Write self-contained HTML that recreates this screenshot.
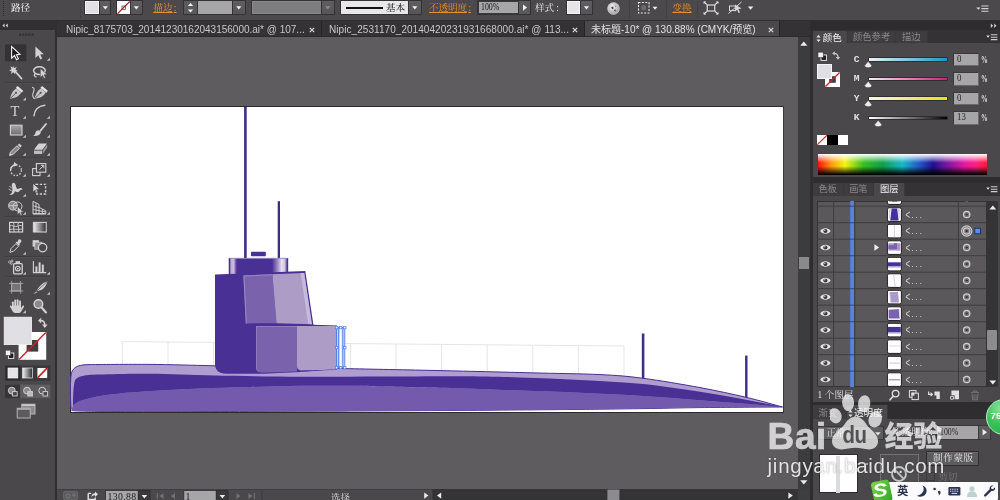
<!DOCTYPE html>
<html lang="zh-CN">
<head>
<meta charset="utf-8">
<title>Illustrator</title>
<style>
*{box-sizing:border-box;margin:0;padding:0}
html,body{width:1000px;height:500px;overflow:hidden;background:#5f5c5f}
body{position:relative;will-change:transform;font-family:"Liberation Sans","Noto Sans CJK SC",sans-serif;font-size:11px;color:#e4e4e4}
.a{position:absolute}
.serif{font-family:"Liberation Serif","Noto Serif CJK SC",serif}
#ctrl{left:0;top:0;width:1000px;height:20px;background:#4b494c}
#ctrlline{left:0;top:20px;width:1000px;height:1px;background:#2f2e31}
#tabs{left:57px;top:21px;width:754px;height:16px;background:#343235;border-bottom:1px solid #2c2a2d}
.tab{top:21px;height:16px;line-height:16px;font-size:12px;color:#c8c8c8;white-space:nowrap;overflow:hidden}
#canvas{left:57px;top:37px;width:741px;height:452px;background:#5f5c5f}
#artboard{left:70px;top:106px;width:714px;height:307px;background:#fff;border:1px solid #2a292c;border-right-color:#3a393c}
#lefthead{left:0;top:21px;width:55px;height:9px;background:#312f32}
#leftbody{left:0;top:30px;width:55px;height:470px;background:#4a484b}
#leftedge{left:55px;top:21px;width:2px;height:479px;background:#2f2e31}
#vscroll{left:798px;top:37px;width:12px;height:452px;background:#3c3b3e}
#vdiv{left:810px;top:21px;width:3px;height:479px;background:#2e2d30}
#right{left:813px;top:21px;width:187px;height:479px;background:#4a484b}
#status{left:57px;top:489px;width:753px;height:11px;background:#4a484b}
.orange{color:#e8902c;text-decoration:underline}
.fld{background:#a5a4a7;color:#1a1a1a}
.btn{background:#5b5a5d}
.sep{width:1px;background:#3a393c}
</style>
</head>
<body>
<!-- ===== base regions ===== -->
<div class="a" id="canvas"></div>
<div class="a" id="artboard"></div>
<!-- ARTWORK -->
<svg class="a" style="left:0;top:0" width="1000" height="500" viewBox="0 0 1000 500">
<defs><linearGradient id="cyl" x1="0" x2="1" y1="0" y2="0"><stop offset="0" stop-color="#483095"/><stop offset="0.02" stop-color="#483095"/><stop offset="0.035" stop-color="#b8a8d8"/><stop offset="0.085" stop-color="#cabee2"/><stop offset="0.115" stop-color="#7860ae"/><stop offset="0.14" stop-color="#493095"/><stop offset="0.73" stop-color="#493095"/><stop offset="0.78" stop-color="#7a62b0"/><stop offset="0.84" stop-color="#b0a0d0"/><stop offset="0.89" stop-color="#e6e0f2"/><stop offset="0.94" stop-color="#cfc6e2"/><stop offset="0.965" stop-color="#8a76b8"/><stop offset="0.985" stop-color="#483095"/><stop offset="1" stop-color="#483095"/></linearGradient></defs>
<g stroke="#dededf" stroke-width="0.8" fill="none"><path d="M122.4,341.6 L624.0,346.0"/><path d="M122.4,341.6 V375.0"/><path d="M168.0,342.0 V375.0"/><path d="M213.6,342.4 V375.0"/><path d="M259.2,342.8 V375.0"/><path d="M304.8,343.2 V375.0"/><path d="M350.4,343.6 V375.0"/><path d="M396.0,344.0 V375.0"/><path d="M441.6,344.4 V375.0"/><path d="M487.2,344.8 V375.0"/><path d="M532.8,345.2 V375.0"/><path d="M578.4,345.6 V375.0"/><path d="M624.0,346.0 V375.0"/></g>
<rect x="641.8" y="333.5" width="2.6" height="46" fill="#3e2d84"/>
<rect x="745.1" y="355.6" width="2.4" height="42.5" fill="#3e2d84"/>
<path d="M70.8,405.0 C70.3,395 70.3,385 70.8,377 C71.5,368 76,365 88,364.6 C98.3,364.6 128.8,364.2 150.0,364.4 C171.2,364.6 190.0,365.2 215.0,365.8 C240.0,366.4 278.3,367.3 300.0,367.8 C321.7,368.3 321.7,368.1 345.0,368.6 C368.3,369.1 409.2,369.9 440.0,370.6 C470.8,371.3 503.3,372.1 530.0,372.8 C556.7,373.5 581.2,373.7 600.0,374.6 C618.8,375.5 626.3,376.1 643.0,378.3 C659.7,380.5 682.8,384.4 700.0,387.6 C717.2,390.8 732.2,394.1 746.0,397.3 C759.8,400.5 776.4,405.4 782.5,407.0 C768.8,407.1 723.2,407.3 700.0,407.6 C676.8,407.9 663.0,408.3 643.0,408.6 C623.0,408.9 610.5,409.1 580.0,409.4 C549.5,409.7 506.7,410.1 460.0,410.4 C413.3,410.7 351.7,411.0 300.0,411.2 C248.3,411.4 186.7,411.6 150.0,411.6 C113.3,411.6 93.0,411.4 80.0,411.0 C67.0,410.6 73.3,409.8 72.0,409.5 C70.9,408.5 70.8,407 70.8,405 Z" fill="#af9dd0" stroke="#483095" stroke-width="1"/>
<path d="M73.0,406.0 C74.2,405.2 75.5,402.7 80.0,401.0 C84.5,399.3 91.7,397.4 100.0,396.0 C108.3,394.6 120.0,393.4 130.0,392.5 C140.0,391.6 148.3,391.1 160.0,390.4 C171.7,389.7 185.0,389.1 200.0,388.5 C215.0,387.9 233.3,387.4 250.0,387.0 C266.7,386.6 283.3,386.0 300.0,385.8 C316.7,385.6 336.7,385.7 350.0,385.8 C363.3,385.9 361.7,386.0 380.0,386.4 C398.3,386.8 436.7,387.5 460.0,388.2 C483.3,388.9 500.0,389.8 520.0,390.6 C540.0,391.4 559.5,391.9 580.0,392.8 C600.5,393.7 623.0,394.8 643.0,396.0 C663.0,397.2 682.8,398.9 700.0,400.2 C717.2,401.5 732.2,402.7 746.0,403.8 C759.8,404.9 776.4,406.5 782.5,407.0 C768.8,407.1 723.2,407.3 700.0,407.6 C676.8,407.9 663.0,408.3 643.0,408.6 C623.0,408.9 610.5,409.1 580.0,409.4 C549.5,409.7 506.7,410.1 460.0,410.4 C413.3,410.7 351.7,411.0 300.0,411.2 C248.3,411.4 186.7,411.6 150.0,411.6 C113.3,411.6 93.0,411.4 80.0,411.0 C67.0,410.6 73.3,409.8 72.0,409.5 C72,408.5 72.5,407 73,406 Z" fill="#745aac"/>
<path d="M73.0,406.0 C73,397 73.3,388 74.5,382 C76,376.5 82,374.8 100,374.5 C108.3,374.4 130.8,373.6 150.0,373.8 C169.2,374.0 190.0,375.1 215.0,375.6 C240.0,376.1 272.5,376.6 300.0,376.8 C327.5,377.0 353.3,376.7 380.0,376.6 C406.7,376.5 436.7,376.1 460.0,376.2 C483.3,376.3 500.0,376.8 520.0,377.4 C540.0,378.0 559.5,378.9 580.0,380.0 C600.5,381.1 623.0,382.0 643.0,384.0 C663.0,386.0 682.8,389.2 700.0,391.8 C717.2,394.4 732.2,397.3 746.0,399.8 C759.8,402.3 776.4,405.8 782.5,407.0 C776.4,406.5 759.8,404.9 746.0,403.8 C732.2,402.7 717.2,401.5 700.0,400.2 C682.8,398.9 663.0,397.2 643.0,396.0 C623.0,394.8 600.5,393.7 580.0,392.8 C559.5,391.9 540.0,391.4 520.0,390.6 C500.0,389.8 483.3,388.9 460.0,388.2 C436.7,387.5 398.3,386.8 380.0,386.4 C361.7,386.0 363.3,385.9 350.0,385.8 C336.7,385.7 316.7,385.6 300.0,385.8 C283.3,386.0 266.7,386.6 250.0,387.0 C233.3,387.4 215.0,387.9 200.0,388.5 C185.0,389.1 171.7,389.7 160.0,390.4 C148.3,391.1 140.0,391.6 130.0,392.5 C120.0,393.4 108.3,394.6 100.0,396.0 C91.7,397.4 84.5,399.3 80.0,401.0 C75.5,402.7 74.2,405.2 73.0,406.0 Z" fill="#493095"/>
<rect x="244.1" y="106.8" width="2.6" height="152" fill="#3e2d84"/>
<rect x="277.7" y="201.2" width="2.3" height="58" fill="#3e2d84"/>
<rect x="251" y="251.7" width="14.8" height="4.6" rx="0.8" fill="#493095"/>
<rect x="228.7" y="258" width="59.5" height="17" fill="url(#cyl)"/>
<rect x="229.5" y="257.8" width="58" height="1.2" fill="#a08cc6" opacity="0.8"/>
<path d="M215,274.6 L305.3,270.9 L313.4,324.8 L337,325.6 L337,369.6 C320,370.8 305,371.8 296,372.2 C280,373.2 262,373.8 250,373.8 L226,373.8 C219,373.8 215,370 215,364 Z" fill="#493095"/>
<path d="M243.4,275.4 L272.4,274.2 L276.5,323.2 L245.8,323.4 Z" fill="#7b62ad"/>
<path d="M243.4,275.4 L272.4,274.2 L272.5,275.2 L244.5,276.4 L246.8,323.4 L245.8,323.4 Z" fill="#9c88c4"/>
<path d="M272.4,274.2 L304.2,272.9 L311.9,324.2 L276.5,323.2 Z" fill="#ad9dc6"/>
<path d="M300.6,273 L304.2,272.9 L311.9,324.2 L308.2,324.1 Z" fill="#c6badc"/>
<path d="M256,326 H297 V371.6 C285,372.3 270,372.6 261,372.4 C257.5,372.2 256,370 256,367 Z" fill="#7b62ad"/>
<path d="M256,326 H297 V327 H257 V367 C257,369 257.5,371 259,372 C257,371.5 256,369.5 256,367 Z" fill="#927cbc"/>
<path d="M297,326 H336.4 V369.3 C322,370 310,370.4 301,370.4 C298.2,370.2 297,368.6 297,366 Z" fill="#ad9dc6"/>
<rect x="336.6" y="327.6" width="8.2" height="40" fill="#d6d6e8"/>
<g stroke="#4a80e6" stroke-width="0.9" fill="none"><rect x="336.6" y="327.6" width="8.2" height="40"/><path d="M338.6,327.6V367.6M342.8,327.6V367.6"/></g>
<path d="M340.7,328V367.2" stroke="#fff" stroke-width="1.6"/>
<g fill="#fff" stroke="#4a80e6" stroke-width="0.7"><rect x="335.4" y="326.4" width="2.4" height="2.4"/><rect x="339.5" y="326.4" width="2.4" height="2.4"/><rect x="343.6" y="326.4" width="2.4" height="2.4"/><rect x="335.4" y="346.4" width="2.4" height="2.4"/><rect x="343.6" y="346.4" width="2.4" height="2.4"/><rect x="335.4" y="366.4" width="2.4" height="2.4"/><rect x="339.5" y="366.4" width="2.4" height="2.4"/><rect x="343.6" y="366.4" width="2.4" height="2.4"/></g>
</svg>
<!-- /ARTWORK -->
<div class="a" id="ctrl"></div>
<div class="a" id="ctrlline"></div>
<div class="a" id="tabs"></div>
<div class="a" id="lefthead"></div>
<div class="a" id="leftbody"></div>
<div class="a" id="leftedge"></div>
<div class="a" id="vscroll"></div>
<div class="a" id="vdiv"></div>
<div class="a" id="right"></div>
<div class="a" id="status"></div>
<!-- CONTROLBAR -->
<div class="a" style="left:3px;top:1px;width:1px;height:15px;background:repeating-linear-gradient(#2c2b2e 0 1px,transparent 1px 2px)"></div>
<div class="a serif" style="left:11px;top:0.5px;font-size:9.6px;line-height:13px;color:#f0f0f0;font-weight:500;white-space:nowrap">路径</div>
<div class="a sep" style="left:79.5px;top:1px;height:17px;background:#414043"></div>
<div class="a" style="left:85.0px;top:0.9px;width:14.0px;height:13.5px;box-shadow:0 0 0 1px #343235;background:#e1e1e5;border:1px solid #f2f2f4"></div>
<div class="a" style="left:99.6px;top:0.9px;width:10.6px;height:13.5px;box-shadow:0 0 0 1px #343235;background:linear-gradient(#605e61,#565457)"><svg width="10.6" height="13.2" style="display:block"><path d="M2.7,5.2 h5.2 l-2.6,3.2 z" fill="#f0f0f0"/></svg></div>
<div class="a" style="left:117.4px;top:0.9px;width:13.2px;height:13.5px;box-shadow:0 0 0 1px #343235;background:#fff"><svg width="13.2" height="13.2" style="display:block"><rect x="5" y="5" width="3.4" height="3.4" fill="none" stroke="#555" stroke-width="0.8"/><path d="M0.5,12.7 L12.7,0.5" stroke="#b0242a" stroke-width="1.2"/></svg></div>
<div class="a" style="left:131.2px;top:0.9px;width:10.6px;height:13.5px;box-shadow:0 0 0 1px #343235;background:linear-gradient(#605e61,#565457)"><svg width="10.6" height="13.2" style="display:block"><path d="M2.7,5.2 h5.2 l-2.6,3.2 z" fill="#f0f0f0"/></svg></div>
<div class="a serif orange" style="left:153.2px;top:0.5px;font-size:9.6px;line-height:13px;white-space:nowrap;letter-spacing:0.2px">描边<span style="margin-left:1px">:</span></div>
<div class="a" style="left:184.4px;top:0.9px;width:13.0px;height:13.5px;box-shadow:0 0 0 1px #343235;background:#5a595c"><svg width="13" height="13.2" style="display:block"><path d="M3.8,5 h5.4 l-2.7,-3 z M3.8,8.4 h5.4 l-2.7,3 z" fill="#f0f0f0"/></svg></div>
<div class="a" style="left:197.6px;top:0.9px;width:35.6px;height:13.5px;box-shadow:0 0 0 1px #343235;background:#a6a5a8"></div>
<div class="a" style="left:233.4px;top:0.9px;width:11.6px;height:13.5px;box-shadow:0 0 0 1px #343235;background:linear-gradient(#605e61,#565457)"><svg width="11.6" height="13.2" style="display:block"><path d="M3.2,5.2 h5.2 l-2.6,3.2 z" fill="#f0f0f0"/></svg></div>
<div class="a" style="left:251.6px;top:0.9px;width:70.6px;height:13.5px;box-shadow:0 0 0 1px #343235;background:#7d7c7f;border:1px solid #8a898c"></div>
<div class="a" style="left:322.4px;top:0.9px;width:11.6px;height:13.5px;box-shadow:0 0 0 1px #343235;background:linear-gradient(#605e61,#565457)"><svg width="11.6" height="13.2" style="display:block"><path d="M3.2,5.2 h5.2 l-2.6,3.2 z" fill="#8c8b8e"/></svg></div>
<div class="a" style="left:341.0px;top:0.9px;width:68.0px;height:13.5px;box-shadow:0 0 0 1px #343235;background:#e7e7e9"><div class="a" style="left:5px;top:6.1px;width:36.5px;height:2px;background:#111"></div><div class="a serif" style="left:45px;top:0;font-size:9.6px;line-height:13px;color:#111;white-space:nowrap">基本</div></div>
<div class="a" style="left:409.4px;top:0.9px;width:11.6px;height:13.5px;box-shadow:0 0 0 1px #343235;background:linear-gradient(#605e61,#565457)"><svg width="11.6" height="13.2" style="display:block"><path d="M3.2,5.2 h5.2 l-2.6,3.2 z" fill="#f0f0f0"/></svg></div>
<div class="a serif orange" style="left:429px;top:0.5px;font-size:9.6px;line-height:13px;white-space:nowrap;letter-spacing:-0.1px">不透明度<span style="margin-left:1.4px">:</span></div>
<div class="a" style="left:478.0px;top:0.9px;width:40.6px;height:13.5px;box-shadow:0 0 0 1px #343235;background:#a6a5a8;border:1px solid #3a393c;border-right:none"><div class="a serif" style="left:1.6px;top:-0.5px;font-size:9.8px;line-height:12px;color:#1c1c1c;transform:scaleX(0.8);transform-origin:0 0">100%</div></div>
<div class="a" style="left:518.8px;top:0.9px;width:11.4px;height:13.5px;box-shadow:0 0 0 1px #343235;background:#5a595c"><svg width="11.4" height="13.2" style="display:block"><path d="M4,3.4 v6.4 l4,-3.2 z" fill="#f0f0f0"/></svg></div>
<div class="a serif" style="left:535px;top:0.5px;font-size:9.6px;line-height:13px;color:#e8e8e8;white-space:nowrap">样式<span style="margin-left:2px">:</span></div>
<div class="a" style="left:567.0px;top:0.9px;width:13.4px;height:13.5px;box-shadow:0 0 0 1px #343235;background:#e6e6ea;border:1px solid #f4f4f6"></div>
<div class="a" style="left:581.0px;top:0.9px;width:11.0px;height:13.5px;box-shadow:0 0 0 1px #343235;background:linear-gradient(#605e61,#565457)"><svg width="11.0" height="13.2" style="display:block"><path d="M2.9,5.2 h5.2 l-2.6,3.2 z" fill="#f0f0f0"/></svg></div>
<svg class="a" style="left:606.5px;top:1.5px" width="13" height="13" viewBox="0 0 13 13"><defs><radialGradient id="gl" cx="0.4" cy="0.35" r="0.7"><stop offset="0" stop-color="#f4f4f4"/><stop offset="1" stop-color="#9a999c"/></radialGradient></defs><circle cx="6.5" cy="6.5" r="5.9" fill="url(#gl)" stroke="#d8d8d8" stroke-width="0.6"/><path d="M4,5.2 l2,-0.6 0.8,1.6 -1.6,1 z M7.4,7.6 l1.6,0.2 -0.4,1.8 -1.4,-0.6 z M7.8,3.4 l1.4,0.6 -0.8,1 z" fill="#4a494c"/></svg>
<div class="a sep" style="left:628.5px;top:1px;height:17px;background:#414043"></div>
<svg class="a" style="left:637px;top:1px" width="22" height="14" viewBox="0 0 22 14"><rect x="1.5" y="1.5" width="10.5" height="10.5" fill="none" stroke="#e8e8e8" stroke-width="1.1" stroke-dasharray="2 1.4"/><circle cx="6.7" cy="6.7" r="2.6" fill="#6a696c"/><path d="M15.5,5.7 h5.0 l-2.5,3.0 z" fill="#f0f0f0"/></svg>
<div class="a sep" style="left:665.5px;top:1px;height:17px;background:#414043"></div>
<div class="a serif orange" style="left:672.4px;top:0.5px;font-size:9.6px;line-height:13px;white-space:nowrap">变换</div>
<div class="a sep" style="left:696.5px;top:1px;height:17px;background:#414043"></div>
<svg class="a" style="left:703px;top:1px" width="16" height="14" viewBox="0 0 16 14"><rect x="4.2" y="4" width="7.6" height="6" fill="none" stroke="#ececec" stroke-width="1.1"/><path d="M1,1 l3,2.6 M15,1 l-3,2.6 M1,13 l3,-2.6 M15,13 l-3,-2.6" stroke="#ececec" stroke-width="1.1"/><path d="M0.6,0.6 h2.6 l-2.6,2.4z M15.4,0.6 h-2.6 l2.6,2.4z M0.6,13.4 h2.6 l-2.6,-2.4z M15.4,13.4 h-2.6 l2.6,-2.4z" fill="#ececec"/></svg>
<svg class="a" style="left:727px;top:1px" width="28" height="14" viewBox="0 0 28 14"><rect x="2.5" y="5" width="6" height="4.6" fill="none" stroke="#d8d8d8" stroke-width="1"/><path d="M8,3.4 L14.6,7.4 L11.4,8 L13,11.4 L11.6,12 L10,8.8 L8,10.6 Z" fill="#d8d8d8"/><path d="M1.5,12.5 L14.5,1" stroke="#d8d8d8" stroke-width="1"/><path d="M20.9,5.6 h5.4 l-2.7,3.2 z" fill="#f0f0f0"/></svg>
<svg class="a" style="left:976px;top:5px" width="13" height="8" viewBox="0 0 13 8"><path d="M0.4,2.4 h4 l-2,2.4z" fill="#e4e4e4"/><path d="M5.4,1 h7 M5.4,3.6 h7 M5.4,6.2 h7" stroke="#d4d4d4" stroke-width="1.1"/></svg>
<!-- /CONTROLBAR -->
<!-- TABS -->
<div class="a" style="left:584px;top:21.4px;width:194.5px;height:14.8px;background:#4a484b"></div>
<div class="a" style="left:320.5px;top:21px;width:1px;height:16px;background:#262427"></div>
<div class="a" style="left:583.5px;top:21px;width:1px;height:16px;background:#262427"></div>
<div class="a" style="left:778.5px;top:21px;width:1px;height:16px;background:#262427"></div>
<div class="a" style="left:66.0px;top:23.3px;font-size:10px;line-height:13px;color:#c8c8c8;white-space:nowrap">Nipic_8175703_20141230162043156000.ai* @ 107...</div>
<svg class="a" style="left:309.0px;top:27.2px" width="6" height="6" viewBox="0 0 6 6"><path d="M0.8,0.8 L5.2,5.2 M5.2,0.8 L0.8,5.2" stroke="#d8d8d8" stroke-width="1.2"/></svg>
<div class="a" style="left:329.0px;top:23.3px;font-size:10px;line-height:13px;color:#c8c8c8;white-space:nowrap"><span style="letter-spacing:0.06px">Nipic_2531170_20140420231931668000.ai* @ 113...</span></div>
<svg class="a" style="left:572.4px;top:27.2px" width="6" height="6" viewBox="0 0 6 6"><path d="M0.8,0.8 L5.2,5.2 M5.2,0.8 L0.8,5.2" stroke="#d8d8d8" stroke-width="1.2"/></svg>
<div class="a" style="left:591.0px;top:23.3px;font-size:10px;line-height:13px;color:#e2e2e2;white-space:nowrap">未标题-10* @ 130.88% (CMYK/预览)</div>
<svg class="a" style="left:767.6px;top:27.2px" width="6" height="6" viewBox="0 0 6 6"><path d="M0.8,0.8 L5.2,5.2 M5.2,0.8 L0.8,5.2" stroke="#d8d8d8" stroke-width="1.2"/></svg>
<!-- /TABS -->
<!-- TOOLS -->
<svg class="a" style="left:0;top:21px" width="57" height="479" viewBox="0 21 57 479">
<path d="M4.6,23.6 L2.4,25.6 L4.6,27.6 Z M7.8,23.6 L5.6,25.6 L7.8,27.6 Z" fill="#d0d0d0"/>
<g fill="#343336"><rect x="19.0" y="33.4" width="2.2" height="2.4"/><rect x="22.1" y="33.4" width="2.2" height="2.4"/><rect x="25.2" y="33.4" width="2.2" height="2.4"/><rect x="28.3" y="33.4" width="2.2" height="2.4"/><rect x="31.4" y="33.4" width="2.2" height="2.4"/></g>
<rect x="5" y="44.4" width="21.4" height="16.8" fill="#343235"/>
<path d="M11.6,46.6 l0,11.6 l2.9,-2.7 l2,4.2 l1.9,-0.9 l-2,-4.1 l3.6,-0.3 Z" fill="#1a1a1a" stroke="#f2f2f2" stroke-width="1.1" stroke-linejoin="miter"/>
<path d="M35.4,46.4 l0,11.6 l2.9,-2.7 l2,4.2 l1.9,-0.9 l-2,-4.1 l3.6,-0.3 Z" fill="#d2d2d2"/>
<path d="M49.9,60.8 v-3.1 l-3.1,3.1 z" fill="#c4c4c4"/>
<path d="M13,65.4 l1,2.6 2.8,-1 -1.4,2.4 2.4,1.6 -2.8,0.4 0.2,2.8 -2,-2 -2.2,1.8 0.6,-2.8 -2.6,-0.8 2.6,-1.2 -1.2,-2.6 2.6,1 Z" fill="#d2d2d2"/>
<path d="M15.4,71.6 L21.6,78.6" stroke="#d2d2d2" stroke-width="1.7" stroke-linecap="round"/>
<ellipse cx="39.4" cy="70.6" rx="5.8" ry="3.9" fill="none" stroke="#d2d2d2" stroke-width="1.5"/>
<path d="M35,73.6 c-1.4,1.4 -0.6,3.4 1.6,3.2" fill="none" stroke="#d2d2d2" stroke-width="1.3"/>
<path d="M40.4,68.4 l0,9 l2.2,-2 l1.4,3 l1.5,-0.7 l-1.4,-3 l2.9,-0.2 Z" fill="#d2d2d2" stroke="#4a484b" stroke-width="0.5"/>
<rect x="5" y="81.9" width="45.5" height="1" fill="#3c3a3d"/><rect x="5" y="82.9" width="45.5" height="0.8" fill="#545255"/>
<rect x="5" y="157.5" width="45.5" height="1" fill="#3c3a3d"/><rect x="5" y="158.5" width="45.5" height="0.8" fill="#545255"/>
<rect x="5" y="215.9" width="45.5" height="1" fill="#3c3a3d"/><rect x="5" y="216.9" width="45.5" height="0.8" fill="#545255"/>
<rect x="5" y="255.9" width="45.5" height="1" fill="#3c3a3d"/><rect x="5" y="256.9" width="45.5" height="0.8" fill="#545255"/>
<rect x="5" y="275.9" width="45.5" height="1" fill="#3c3a3d"/><rect x="5" y="276.9" width="45.5" height="0.8" fill="#545255"/>
<g transform="translate(9.8,86.0)"><path d="M0.2,12.8 C1,8 3.2,4.4 6.6,2.2 L11.4,6.8 C9.2,10.4 5.6,12.2 0.2,12.8 Z" fill="#c6c6c6"/><path d="M0.8,12.2 L5.8,7.2" stroke="#4a484b" stroke-width="0.9"/><circle cx="6.2" cy="6.8" r="1" fill="#4a484b"/><path d="M7.8,0 L13.4,4.8 L12,6.8 L6,1.8 Z" fill="#e2e2e2"/></g>
<g transform="translate(34.4,86.0)"><path d="M0.2,12.8 C1,8 3.2,4.4 6.6,2.2 L11.4,6.8 C9.2,10.4 5.6,12.2 0.2,12.8 Z" fill="#c6c6c6"/><path d="M0.8,12.2 L5.8,7.2" stroke="#4a484b" stroke-width="0.9"/><circle cx="6.2" cy="6.8" r="1" fill="#4a484b"/><path d="M7.8,0 L13.4,4.8 L12,6.8 L6,1.8 Z" fill="#e2e2e2"/></g>
<path d="M32,87.2 c2.2,0.2 2.6,2 1.6,4.4 c-1.2,2.8 -1.8,5.6 1.2,7.2" fill="none" stroke="#d2d2d2" stroke-width="1.1"/>
<path d="M25.9,100.4 v-3.1 l-3.1,3.1 z" fill="#c4c4c4"/>
<text x="10.6" y="115.6" font-family="Liberation Serif, serif" font-size="14.6" fill="#d2d2d2">T</text>
<path d="M34,115.8 C34.4,110 38.4,105.8 44.8,105.2" fill="none" stroke="#d2d2d2" stroke-width="1.5" stroke-linecap="round"/>
<path d="M25.9,118.8 v-3.1 l-3.1,3.1 z" fill="#c4c4c4"/>
<path d="M49.9,118.8 v-3.1 l-3.1,3.1 z" fill="#c4c4c4"/>
<defs><linearGradient id="rg" x1="0" x2="0" y1="0" y2="1"><stop offset="0" stop-color="#a6a5a8"/><stop offset="1" stop-color="#6e6d70"/></linearGradient><linearGradient id="gg" x1="0" x2="1" y1="0" y2="0"><stop offset="0" stop-color="#f0f0f0"/><stop offset="1" stop-color="#2c2b2e"/></linearGradient></defs>
<rect x="10.4" y="125.2" width="11.6" height="9.8" fill="url(#rg)" stroke="#d2d2d2" stroke-width="1.1"/>
<path d="M46,124 L40.2,131" stroke="#d2d2d2" stroke-width="1.9" stroke-linecap="round"/><path d="M38.4,130.2 l2.4,2 c-0.6,3 -3.6,4.2 -8,3.6 c2,-0.6 2.4,-1.8 2.6,-3 c0.2,-1.4 1.4,-2.4 3,-2.6 Z" fill="#d2d2d2"/>
<path d="M25.9,137.8 v-3.1 l-3.1,3.1 z" fill="#c4c4c4"/>
<path d="M49.9,137.8 v-3.1 l-3.1,3.1 z" fill="#c4c4c4"/>
<path d="M19.2,143.4 l2.6,2.4 l-1.4,1.6 l-2.6,-2.4 Z" fill="#d2d2d2"/><path d="M17,145.8 l2.6,2.4 l-6.6,6.2 l-3.4,1 l0.8,-3.4 Z" fill="#8c8c8c" stroke="#d2d2d2" stroke-width="1" stroke-linejoin="round"/><path d="M9.6,155.4 l0.6,-2 l1.4,1.4 Z" fill="#d2d2d2"/>
<path d="M38.6,143.6 h8.4 l-4.6,6.2 h-8.4 Z" fill="#d2d2d2"/><path d="M34,150.6 h8.2 v3.4 h-8.2 Z" fill="#bdbdbd"/><path d="M43,150.2 l4.2,-5.8 v3.2 l-4.2,6 Z" fill="#9a999c"/>
<path d="M25.9,155.8 v-3.1 l-3.1,3.1 z" fill="#c4c4c4"/>
<path d="M49.9,155.8 v-3.1 l-3.1,3.1 z" fill="#c4c4c4"/>
<circle cx="16" cy="170.2" r="5.4" fill="none" stroke="#d2d2d2" stroke-width="1.3" stroke-dasharray="1.6 1.5"/>
<path d="M10.6,170 a5.4,5.4 0 0 1 5.4,-5.2" fill="none" stroke="#d2d2d2" stroke-width="1.4"/><path d="M14,162 l3.6,2.8 l-3.8,2 Z" fill="#d2d2d2"/>
<rect x="32.6" y="168.6" width="7.4" height="7" fill="none" stroke="#d2d2d2" stroke-width="1.1"/><rect x="36.4" y="163.6" width="9.4" height="8.6" fill="#4a484b" stroke="#d2d2d2" stroke-width="1.1"/><path d="M39.4,169.6 l4,-3.8 M41,165.4 h2.8 v2.8" fill="none" stroke="#d2d2d2" stroke-width="1"/>
<path d="M25.9,176.8 v-3.1 l-3.1,3.1 z" fill="#c4c4c4"/>
<path d="M49.9,176.8 v-3.1 l-3.1,3.1 z" fill="#c4c4c4"/>
<path d="M9,195 c2.4,-1 3.4,-3 3.4,-5.6 c0,-2.8 -1.4,-4.4 -0.2,-6 c1.4,-1.6 3.4,0.2 3.6,2.2 c0.4,2.8 1.4,4 3.2,3 c1.6,-1 2.8,-0.8 3.8,1 c-2,-0.2 -2.6,0.6 -3.4,1.6 c-1.2,1.6 -3.4,1 -4.4,-0.2 c-0.4,2.4 -2.4,4.6 -6,4 Z" fill="#d2d2d2"/><path d="M8.6,189 l3,1.8 M9.4,186.4 l2.4,1.6" stroke="#d2d2d2" stroke-width="0.9"/>
<rect x="36" y="184.4" width="9.6" height="9.6" fill="none" stroke="#d2d2d2" stroke-width="1.4" stroke-dasharray="2.2 1.6"/><path d="M33,183.4 l0,8.6 l2.2,-2 l1.4,3 l1.4,-0.7 l-1.4,-2.9 l2.8,-0.2 Z" fill="#d2d2d2" stroke="#4a484b" stroke-width="0.5"/>
<path d="M25.9,196.8 v-3.1 l-3.1,3.1 z" fill="#c4c4c4"/>
<circle cx="13" cy="205.6" r="4.4" fill="#8a898c" stroke="#d2d2d2" stroke-width="1"/><circle cx="17.6" cy="206.4" r="4.4" fill="none" stroke="#d2d2d2" stroke-width="1"/><path d="M9,205.6 h8" stroke="#d2d2d2" stroke-width="0.8"/><path d="M17.4,206.6 l0,8 l2,-1.8 l1.3,2.8 l1.4,-0.7 l-1.3,-2.7 l2.6,-0.2 Z" fill="#d2d2d2" stroke="#4a484b" stroke-width="0.5"/>
<path d="M33,201.4 l6,3 v9.4 h-6 Z" fill="none" stroke="#d2d2d2" stroke-width="1"/><path d="M33,205.6 l6,2 M33,209.6 l6,1 M36,203 v10.6 M39,207.4 l6.8,3.4 v3 h-6.8 M42.4,209 v4.8 M39,210.8 l6.8,1.2" fill="none" stroke="#d2d2d2" stroke-width="0.9"/><path d="M33,213.8 h12.8" stroke="#d2d2d2" stroke-width="1.2"/>
<path d="M25.9,214.8 v-3.1 l-3.1,3.1 z" fill="#c4c4c4"/>
<path d="M49.9,214.8 v-3.1 l-3.1,3.1 z" fill="#c4c4c4"/>
<rect x="9.6" y="222.4" width="13" height="9.6" fill="none" stroke="#d2d2d2" stroke-width="1.2"/><path d="M9.6,226 c3,-1.6 5,1.6 7.4,0.4 c2,-1 3.6,-1.6 5.6,0 M13.4,222.4 c1.6,3 -1,6 1,9.6 M18.4,222.4 c-1.6,3 1.6,6 0,9.6 M9.6,229.4 c4,-1 8,1 13,-0.6" fill="none" stroke="#d2d2d2" stroke-width="0.9"/>
<rect x="33.4" y="222.4" width="12.8" height="9.6" fill="url(#gg)" stroke="#d2d2d2" stroke-width="1.1"/>
<path d="M18.6,239.4 c1.6,-1 3.6,1 2.6,2.6 l-2,2 l0.8,0.8 l-1,1 l-3.4,-3.4 l1,-1 l0.8,0.8 Z" fill="#d2d2d2"/><path d="M16,243.6 l-5,5 l-0.6,2.4 l-0.8,1 l0.6,0.6 l1,-0.8 l2.4,-0.6 l5,-5 Z" fill="none" stroke="#d2d2d2" stroke-width="1" stroke-linejoin="round"/>
<rect x="32.6" y="240.2" width="6.4" height="6.4" fill="#d2d2d2"/><rect x="34.8" y="242.2" width="7" height="7" fill="#8e8d90" stroke="#d2d2d2" stroke-width="0.7"/><circle cx="42.6" cy="247.6" r="4.2" fill="#4a484b" stroke="#d2d2d2" stroke-width="1.3"/>
<path d="M25.9,254.8 v-3.1 l-3.1,3.1 z" fill="#c4c4c4"/>
<rect x="13.6" y="263.6" width="8.6" height="10.2" rx="1" fill="none" stroke="#d2d2d2" stroke-width="1.3"/><rect x="15.6" y="261.2" width="4.4" height="2.4" fill="#d2d2d2"/><circle cx="17.8" cy="268.6" r="2.3" fill="none" stroke="#d2d2d2" stroke-width="1.1"/><circle cx="17.8" cy="268.6" r="0.9" fill="#d2d2d2"/><circle cx="9.6" cy="262" r="1.1" fill="none" stroke="#d2d2d2" stroke-width="0.7"/><circle cx="12" cy="261" r="1" fill="none" stroke="#d2d2d2" stroke-width="0.7"/><circle cx="11.4" cy="263.6" r="0.9" fill="none" stroke="#d2d2d2" stroke-width="0.7"/>
<path d="M33.4,261 v11.6 h12.8" fill="none" stroke="#d2d2d2" stroke-width="1.1"/><rect x="35.4" y="266.4" width="2" height="5.6" fill="#d2d2d2"/><rect x="38.6" y="262.4" width="2" height="9.6" fill="#d2d2d2"/><rect x="41.8" y="264.6" width="2" height="7.4" fill="#d2d2d2"/>
<path d="M25.9,274.8 v-3.1 l-3.1,3.1 z" fill="#c4c4c4"/>
<path d="M49.9,274.8 v-3.1 l-3.1,3.1 z" fill="#c4c4c4"/>
<rect x="11.6" y="283.4" width="9" height="7.6" fill="#77757a" stroke="#bcbcbc" stroke-width="0.9"/><path d="M9,283.4 h14.4 M9,291 h14.4 M11.6,280.8 v12.8 M20.6,280.8 v12.8" stroke="#a8a8a8" stroke-width="0.8"/>
<path d="M47.4,281.4 C44,282 40.4,284.6 38,288.6 L36.4,291.2 L41.4,290 C44.4,288 46.6,284.8 47.4,281.4 Z" fill="#d2d2d2"/><path d="M36.2,291.4 L33,294 L37.6,292.6 Z" fill="#b8b8b8"/><path d="M47.2,281.6 L37,290.8" stroke="#4a484b" stroke-width="0.7"/>
<path d="M49.9,294.8 v-3.1 l-3.1,3.1 z" fill="#c4c4c4"/>
<g fill="#d2d2d2"><rect x="11.9" y="301.4" width="1.9" height="6.5" rx="0.95"/><rect x="14.3" y="299.6" width="1.9" height="8.0" rx="0.95"/><rect x="16.7" y="299.2" width="1.9" height="8.0" rx="0.95"/><rect x="19.1" y="300.6" width="1.9" height="7.0" rx="0.95"/><path d="M11.9,305.6 h9.1 v2.6 l1.4,-2.2 c0.8,-1 2.2,-0.2 1.5,1 l-2.7,4.4 c-0.6,1 -1.5,1.5 -2.7,1.5 h-3.2 c-1.3,0 -2.1,-0.6 -2.7,-1.7 l-2.6,-4.4 c-0.6,-1.2 0.9,-1.9 1.5,-0.8 l0.4,0.6 Z"/></g>
<path d="M25.9,313.2 v-3.1 l-3.1,3.1 z" fill="#c4c4c4"/>
<circle cx="38.4" cy="304" r="4.3" fill="#8a898c" stroke="#d2d2d2" stroke-width="1.5"/><path d="M41.6,307.4 L46,312.4" stroke="#d2d2d2" stroke-width="2.2" stroke-linecap="round"/>
<rect x="18.6" y="332" width="27.6" height="27.8" fill="#fff"/><rect x="26.6" y="340" width="11.6" height="11.6" fill="#3e3d40"/><path d="M19,359.4 L45.8,332.4" stroke="#d0242a" stroke-width="1.4"/>
<rect x="4.2" y="317.2" width="27.4" height="27.4" fill="#e0e0e4" stroke="#f4f4f6" stroke-width="0.8"/>
<path d="M40.4,320.6 c3,0 4.4,1.6 4.4,4.6" fill="none" stroke="#d2d2d2" stroke-width="1.5"/><path d="M41.2,317.8 l-3.2,2.8 l3.2,2.8 Z M42,324.6 l2.8,3.4 l2.8,-3.4 Z" fill="#d2d2d2"/>
<rect x="8.4" y="353" width="5.4" height="5.4" fill="#1c1c1c" stroke="#f0f0f0" stroke-width="0.9"/><rect x="5.4" y="350.2" width="5.2" height="5.2" fill="#f4f4f4" stroke="#333" stroke-width="0.5"/>
<rect x="5" y="365.4" width="45.4" height="15.4" fill="#3a393c"/>
<rect x="5.6" y="366" width="14.6" height="14.2" fill="#2c2b2e"/>
<rect x="8" y="368" width="9.8" height="10" fill="#e4e4e8" stroke="#f8f8f8" stroke-width="0.7"/>
<rect x="22.6" y="368" width="9.8" height="10" fill="url(#gg)" stroke="#e8e8e8" stroke-width="0.7"/>
<rect x="37.4" y="368" width="9.8" height="10" fill="#fff"/><path d="M37.6,377.8 L47,368.2" stroke="#d0242a" stroke-width="1.8"/>
<rect x="5" y="384.6" width="45.4" height="13.6" fill="#5f5d60"/><rect x="5" y="384.6" width="15" height="13.6" fill="#363437"/>
<circle cx="11.8" cy="390.6" r="3.4" fill="#8a898c" stroke="#d2d2d2" stroke-width="1"/><rect x="12.6" y="391.6" width="4.6" height="4.4" fill="#4a484b" stroke="#d2d2d2" stroke-width="0.9"/>
<circle cx="27.0" cy="390.6" r="3.4" fill="#8a898c" stroke="#d2d2d2" stroke-width="1"/><rect x="27.8" y="391.6" width="4.6" height="4.4" fill="#bbb" stroke="#d2d2d2" stroke-width="0.9"/>
<circle cx="42.2" cy="390.6" r="3.4" fill="none" stroke="#d2d2d2" stroke-width="1"/><rect x="43.0" y="391.6" width="4.6" height="4.4" fill="#4a484b" stroke="#d2d2d2" stroke-width="0.9"/>
<rect x="21.8" y="404.2" width="13.2" height="9.8" fill="#8a898c" stroke="#bdbdbd" stroke-width="0.9"/><rect x="21.8" y="404.2" width="13.2" height="1.8" fill="#c8c8c8"/><rect x="17.2" y="408.2" width="13" height="9.8" fill="#5c5a5d" stroke="#bdbdbd" stroke-width="0.9"/><rect x="17.2" y="408.2" width="13" height="1.6" fill="#b0b0b0"/>
</svg>
<!-- /TOOLS -->
<!-- RIGHTPANEL -->
<div class="a" style="left:811.0px;top:21.0px;width:189.0px;height:9.0px;background:#2e2c2f"></div>
<svg class="a" style="left:990px;top:23px" width="8" height="6" viewBox="0 0 8 6"><path d="M0.8,0.6 L3,2.8 L0.8,5 Z M4.2,0.6 L6.4,2.8 L4.2,5 Z" fill="#d0d0d0"/></svg>
<div class="a" style="left:813.0px;top:30.0px;width:187.0px;height:13.4px;background:#343235"></div>
<div class="a" style="left:847.6px;top:30.6px;width:79.0px;height:12.8px;background:#3e3c3f"></div>
<div class="a" style="left:813.0px;top:30.6px;width:33.6px;height:13.0px;background:#4a484b"></div>
<div class="a" style="left:846.6px;top:30.0px;width:1.0px;height:13.4px;background:#38373a"></div>
<div class="a" style="left:895.0px;top:30.0px;width:1.0px;height:13.4px;background:#38373a"></div>
<div class="a" style="left:926.6px;top:30.0px;width:1.0px;height:13.4px;background:#38373a"></div>
<svg class="a" style="left:815.8px;top:33.6px" width="5" height="9" viewBox="0 0 5 9"><path d="M0.4,3.4 L2.5,0.8 L4.6,3.4 Z M0.4,5.4 L2.5,8 L4.6,5.4 Z" fill="#e4e4e4"/></svg>
<div class="a " style="left:822.8px;top:31.2px;white-space:nowrap;font-size:9.5px;line-height:13px;color:#f2f2f2">颜色</div>
<div class="a " style="left:853.0px;top:31.2px;white-space:nowrap;font-size:9.3px;line-height:13px;color:#8a888b">颜色参考</div>
<div class="a " style="left:902.0px;top:31.2px;white-space:nowrap;font-size:9.3px;line-height:13px;color:#8a888b">描边</div>
<svg class="a" style="left:986.0px;top:33.6px" width="12" height="7" viewBox="0 0 12 7"><path d="M0.2,1.6 h3.6 l-1.8,2.2z" fill="#e0e0e0"/><path d="M4.8,0.8 h6.6 M4.8,3.2 h6.6 M4.8,5.6 h6.6" stroke="#cfcfcf" stroke-width="1.1"/></svg>
<svg class="a" style="left:817px;top:50px" width="26" height="13" viewBox="0 0 26 13"><rect x="4" y="5" width="5.4" height="5.4" fill="#1c1c1c" stroke="#f0f0f0" stroke-width="0.9"/><rect x="1" y="2.2" width="5.2" height="5.2" fill="#f4f4f4" stroke="#333" stroke-width="0.5"/><path d="M17,3.4 c2.8,0 4,1.6 4,4" fill="none" stroke="#c8c8c8" stroke-width="1.2"/><path d="M17.8,1.2 l-2.6,2.2 l2.6,2.2 Z M18.8,7 l2.2,2.8 l2.2,-2.8 Z" fill="#c8c8c8"/></svg>
<div class="a" style="left:825.0px;top:72.0px;width:15.0px;height:15.0px;background:#fff"><svg width="15" height="15" style="display:block"><rect x="4.2" y="4.2" width="6.6" height="6.6" fill="#3e3d40"/><path d="M0.4,14.6 L14.6,0.4" stroke="#d0242a" stroke-width="1.3"/></svg></div>
<div class="a" style="left:817.4px;top:64.0px;width:15.0px;height:15.2px;background:#e0e0e4;border:1px solid #f4f4f6"></div>
<div class="a " style="left:853.8px;top:52.8px;white-space:nowrap;font-family:'Liberation Mono',monospace;font-size:9.6px;line-height:13px;color:#e2e2e2;font-weight:bold">C</div>
<div class="a" style="left:867.6px;top:57.2px;width:80.6px;height:4.4px;background:linear-gradient(90deg,#eaf4f6,#1898c0);border:1px solid #2e2d30;border-radius:1px"></div>
<svg class="a" style="left:864.2px;top:61.2px" width="8.4" height="7" viewBox="0 0 7 5.83"><path d="M3.5,0.2 L6.4,3.6 C6.6,5 5.6,5.6 3.5,5.6 C1.4,5.6 0.4,5 0.6,3.6 Z" fill="#ececec" stroke="#3a393c" stroke-width="0.5"/></svg>
<div class="a" style="left:953.0px;top:52.6px;width:26.0px;height:13.6px;background:#a6a5a8;border:1px solid #39383b;border-right-color:#6a696c;border-bottom-color:#6a696c"><div class="a serif" style="left:2.6px;top:-0.6px;font-size:9.8px;line-height:12px;color:#2a2a2a;transform:scaleX(0.9);transform-origin:0 0">0</div></div>
<div class="a serif" style="left:981.0px;top:53.0px;white-space:nowrap;font-size:9.6px;line-height:13px;color:#e2e2e2;font-weight:bold;transform:scaleX(0.7);transform-origin:0 0">%</div>
<div class="a " style="left:853.8px;top:72.2px;white-space:nowrap;font-family:'Liberation Mono',monospace;font-size:9.6px;line-height:13px;color:#e2e2e2;font-weight:bold">M</div>
<div class="a" style="left:867.6px;top:76.6px;width:80.6px;height:4.4px;background:linear-gradient(90deg,#f8ecf2,#cc1c84);border:1px solid #2e2d30;border-radius:1px"></div>
<svg class="a" style="left:864.2px;top:80.6px" width="8.4" height="7" viewBox="0 0 7 5.83"><path d="M3.5,0.2 L6.4,3.6 C6.6,5 5.6,5.6 3.5,5.6 C1.4,5.6 0.4,5 0.6,3.6 Z" fill="#ececec" stroke="#3a393c" stroke-width="0.5"/></svg>
<div class="a" style="left:953.0px;top:72.0px;width:26.0px;height:13.6px;background:#a6a5a8;border:1px solid #39383b;border-right-color:#6a696c;border-bottom-color:#6a696c"><div class="a serif" style="left:2.6px;top:-0.6px;font-size:9.8px;line-height:12px;color:#2a2a2a;transform:scaleX(0.9);transform-origin:0 0">0</div></div>
<div class="a serif" style="left:981.0px;top:72.4px;white-space:nowrap;font-size:9.6px;line-height:13px;color:#e2e2e2;font-weight:bold;transform:scaleX(0.7);transform-origin:0 0">%</div>
<div class="a " style="left:853.8px;top:91.8px;white-space:nowrap;font-family:'Liberation Mono',monospace;font-size:9.6px;line-height:13px;color:#e2e2e2;font-weight:bold">Y</div>
<div class="a" style="left:867.6px;top:96.2px;width:80.6px;height:4.4px;background:linear-gradient(90deg,#f6f6e8,#e6e01c);border:1px solid #2e2d30;border-radius:1px"></div>
<svg class="a" style="left:864.2px;top:100.2px" width="8.4" height="7" viewBox="0 0 7 5.83"><path d="M3.5,0.2 L6.4,3.6 C6.6,5 5.6,5.6 3.5,5.6 C1.4,5.6 0.4,5 0.6,3.6 Z" fill="#ececec" stroke="#3a393c" stroke-width="0.5"/></svg>
<div class="a" style="left:953.0px;top:91.6px;width:26.0px;height:13.6px;background:#a6a5a8;border:1px solid #39383b;border-right-color:#6a696c;border-bottom-color:#6a696c"><div class="a serif" style="left:2.6px;top:-0.6px;font-size:9.8px;line-height:12px;color:#2a2a2a;transform:scaleX(0.9);transform-origin:0 0">0</div></div>
<div class="a serif" style="left:981.0px;top:92.0px;white-space:nowrap;font-size:9.6px;line-height:13px;color:#e2e2e2;font-weight:bold;transform:scaleX(0.7);transform-origin:0 0">%</div>
<div class="a " style="left:853.8px;top:111.2px;white-space:nowrap;font-family:'Liberation Mono',monospace;font-size:9.6px;line-height:13px;color:#e2e2e2;font-weight:bold">K</div>
<div class="a" style="left:867.6px;top:115.6px;width:80.6px;height:4.4px;background:linear-gradient(90deg,#ffffff,#000000);border:1px solid #2e2d30;border-radius:1px"></div>
<svg class="a" style="left:874.4px;top:119.6px" width="8.4" height="7" viewBox="0 0 7 5.83"><path d="M3.5,0.2 L6.4,3.6 C6.6,5 5.6,5.6 3.5,5.6 C1.4,5.6 0.4,5 0.6,3.6 Z" fill="#ececec" stroke="#3a393c" stroke-width="0.5"/></svg>
<div class="a" style="left:953.0px;top:111.0px;width:26.0px;height:13.6px;background:#a6a5a8;border:1px solid #39383b;border-right-color:#6a696c;border-bottom-color:#6a696c"><div class="a serif" style="left:2.6px;top:-0.6px;font-size:9.8px;line-height:12px;color:#2a2a2a;transform:scaleX(0.9);transform-origin:0 0">13</div></div>
<div class="a serif" style="left:981.0px;top:111.4px;white-space:nowrap;font-size:9.6px;line-height:13px;color:#e2e2e2;font-weight:bold;transform:scaleX(0.7);transform-origin:0 0">%</div>
<div class="a" style="left:817.2px;top:135.2px;width:30.8px;height:10.0px;background:#fff"><div class="a" style="left:10.2px;top:0;width:10.3px;height:10px;background:#000"></div><svg class="a" style="left:0;top:0" width="10.2" height="10"><path d="M0.2,9.8 L10,0.2" stroke="#d0242a" stroke-width="1.1"/></svg></div>
<div class="a" style="left:818.0px;top:153.8px;width:169.0px;height:21.4px;background:linear-gradient(180deg,#fff 0%,rgba(255,255,255,0) 42%,rgba(0,0,0,0) 58%,#000 98%),linear-gradient(90deg,#ff1010 0%,#ff9a10 8%,#f4f410 16%,#38c020 27%,#10a048 38%,#18b8c8 50%,#2058c8 60%,#201090 68%,#8018a0 77%,#e818a0 87%,#ff2080 94%,#ff1830 100%)"></div>
<div class="a" style="left:811.0px;top:177.4px;width:189.0px;height:5.2px;background:#2e2c2f"></div>
<div class="a" style="left:813.0px;top:182.6px;width:187.0px;height:13.4px;background:#343235"></div>
<div class="a" style="left:813.0px;top:182.6px;width:61.0px;height:13.4px;background:#3e3c3f"></div>
<div class="a" style="left:874.0px;top:182.6px;width:30.4px;height:13.6px;background:#4a484b"></div>
<div class="a" style="left:843.0px;top:182.6px;width:1.0px;height:13.4px;background:#38373a"></div>
<div class="a" style="left:873.4px;top:182.6px;width:1.0px;height:13.4px;background:#38373a"></div>
<div class="a" style="left:904.4px;top:182.6px;width:1.0px;height:13.4px;background:#38373a"></div>
<div class="a " style="left:818.6px;top:183.4px;white-space:nowrap;font-size:9.2px;line-height:13px;color:#8a888b">色板</div>
<div class="a " style="left:849.2px;top:183.4px;white-space:nowrap;font-size:9.2px;line-height:13px;color:#8a888b">画笔</div>
<div class="a " style="left:880.0px;top:183.4px;white-space:nowrap;font-size:9.3px;line-height:13px;color:#f2f2f2">图层</div>
<svg class="a" style="left:986.0px;top:186.4px" width="12" height="7" viewBox="0 0 12 7"><path d="M0.2,1.6 h3.6 l-1.8,2.2z" fill="#e0e0e0"/><path d="M4.8,0.8 h6.6 M4.8,3.2 h6.6 M4.8,5.6 h6.6" stroke="#cfcfcf" stroke-width="1.1"/></svg>
<div class="a" style="left:813.0px;top:196.0px;width:187.0px;height:5.0px;background:#4a484b"></div>
<div class="a" style="left:817.0px;top:200.6px;width:169.6px;height:186.8px;background:#5b585b;border:1px solid #353336"></div>
<div class="a" style="left:986.6px;top:200.6px;width:11.4px;height:186.8px;background:#343336"></div>
<div class="a" style="left:987.4px;top:330.0px;width:9.4px;height:20.0px;background:#8c8b8e;border-radius:1px"></div>
<svg class="a" style="left:988.6px;top:204.6px" width="8" height="5"><path d="M0.4,4.6 L3.8,0.6 L7.2,4.6 Z" fill="#ececec"/></svg>
<svg class="a" style="left:988.6px;top:379.6px" width="8" height="5"><path d="M0.4,0.4 L3.8,4.4 L7.2,0.4 Z" fill="#ececec"/></svg>
<svg class="a" style="left:817px;top:201px" width="170" height="186" viewBox="817 201 170 186"><rect x="817.6" y="205.70" width="168.6" height="1" fill="#3d3c3f"/><rect x="817.6" y="222.20" width="168.6" height="1" fill="#3d3c3f"/><rect x="817.6" y="238.70" width="168.6" height="1" fill="#3d3c3f"/><rect x="817.6" y="255.20" width="168.6" height="1" fill="#3d3c3f"/><rect x="817.6" y="271.70" width="168.6" height="1" fill="#3d3c3f"/><rect x="817.6" y="288.20" width="168.6" height="1" fill="#3d3c3f"/><rect x="817.6" y="304.70" width="168.6" height="1" fill="#3d3c3f"/><rect x="817.6" y="321.20" width="168.6" height="1" fill="#3d3c3f"/><rect x="817.6" y="337.70" width="168.6" height="1" fill="#3d3c3f"/><rect x="817.6" y="354.20" width="168.6" height="1" fill="#3d3c3f"/><rect x="817.6" y="370.70" width="168.6" height="1" fill="#3d3c3f"/><rect x="833.1" y="201" width="1" height="186" fill="#3d3c3f"/><rect x="854.3" y="201" width="1" height="186" fill="#3d3c3f"/><rect x="957.9" y="201" width="1" height="186" fill="#3d3c3f"/><rect x="850.2" y="201" width="3.8" height="186" fill="#5584de"/><rect x="850.2" y="205.60" width="3.8" height="1.2" fill="#3a4e80"/><rect x="850.2" y="222.10" width="3.8" height="1.2" fill="#3a4e80"/><rect x="850.2" y="238.60" width="3.8" height="1.2" fill="#3a4e80"/><rect x="850.2" y="255.10" width="3.8" height="1.2" fill="#3a4e80"/><rect x="850.2" y="271.60" width="3.8" height="1.2" fill="#3a4e80"/><rect x="850.2" y="288.10" width="3.8" height="1.2" fill="#3a4e80"/><rect x="850.2" y="304.60" width="3.8" height="1.2" fill="#3a4e80"/><rect x="850.2" y="321.10" width="3.8" height="1.2" fill="#3a4e80"/><rect x="850.2" y="337.60" width="3.8" height="1.2" fill="#3a4e80"/><rect x="850.2" y="354.10" width="3.8" height="1.2" fill="#3a4e80"/><rect x="850.2" y="370.60" width="3.8" height="1.2" fill="#3a4e80"/><g><rect x="887.4" y="190.80" width="14" height="13.6" rx="1.6" fill="#fff" stroke="#1e1e20" stroke-width="1"/><rect x="889" y="198.8" width="10.8" height="3" fill="#ab99c9"/><rect x="892" y="198.8" width="5" height="3" fill="#7b62ad"/></g><text transform="translate(905.4 201.5) scale(0.72 1.05)" font-family="Liberation Sans, sans-serif" font-size="11.5" fill="#cfcfcf">&lt;</text><text x="911.2" y="200.9" font-family="Liberation Sans, sans-serif" font-size="9.4" fill="#cfcfcf" letter-spacing="1.5">...</text><circle cx="966.7" cy="197.5" r="3.2" fill="#7a787b" stroke="#cfcfcf" stroke-width="1.2"/><circle cx="966.7" cy="197.5" r="1.1" fill="#2a282b"/><g><rect x="887.4" y="207.80" width="14" height="13.6" rx="1.6" fill="#fff" stroke="#1e1e20" stroke-width="1"/><path d="M891.6,208.6 h5.6 l1.4,12 h-8.4 Z" fill="#47309a"/><path d="M889,208.8 h2 l-1.2,10 h-0.8z M899.8,208.8 h-2 l1.2,10 h0.8z" fill="#d8d0e8"/></g><text transform="translate(905.4 218.5) scale(0.72 1.05)" font-family="Liberation Sans, sans-serif" font-size="11.5" fill="#cfcfcf">&lt;</text><text x="911.2" y="217.9" font-family="Liberation Sans, sans-serif" font-size="9.4" fill="#cfcfcf" letter-spacing="1.5">...</text><circle cx="966.7" cy="214.5" r="3.2" fill="#7a787b" stroke="#cfcfcf" stroke-width="1.2"/><circle cx="966.7" cy="214.5" r="1.1" fill="#2a282b"/><g><rect x="887.4" y="224.30" width="14" height="13.6" rx="1.6" fill="#fff" stroke="#1e1e20" stroke-width="1"/><path d="M894.4,225.1 v12" stroke="#c8c8cc" stroke-width="0.8"/></g><path d="M820.2,231.0 c2,-3.6 8.4,-3.6 10.4,0 c-2,3.6 -8.4,3.6 -10.4,0 Z" fill="#e6e6e6"/><circle cx="825.4" cy="231.0" r="2.1" fill="#3a393c"/><circle cx="824.8" cy="230.3" r="0.7" fill="#d0d0d0"/><text transform="translate(905.4 235.0) scale(0.72 1.05)" font-family="Liberation Sans, sans-serif" font-size="11.5" fill="#cfcfcf">&lt;</text><text x="911.2" y="234.4" font-family="Liberation Sans, sans-serif" font-size="9.4" fill="#cfcfcf" letter-spacing="1.5">...</text><circle cx="966.7" cy="231.0" r="5.1" fill="#6e6c6f" stroke="#cfcfcf" stroke-width="1.1"/><circle cx="966.7" cy="231.0" r="3.2" fill="#7a787b" stroke="#cfcfcf" stroke-width="1.2"/><circle cx="966.7" cy="231.0" r="1.1" fill="#2a282b"/><rect x="974.8" y="228.2" width="5.6" height="5.6" fill="#5a8af8" stroke="#1c2c58" stroke-width="0.9"/><g><rect x="887.4" y="240.80" width="14" height="13.6" rx="1.6" fill="#fff" stroke="#1e1e20" stroke-width="1"/><rect x="888.4" y="243.2" width="12" height="7.4" fill="#ab99c9"/><rect x="888.4" y="245.2" width="6" height="4" fill="#7b62ad"/><rect x="894" y="243.2" width="3" height="6" fill="#7b62ad"/></g><path d="M820.2,247.5 c2,-3.6 8.4,-3.6 10.4,0 c-2,3.6 -8.4,3.6 -10.4,0 Z" fill="#e6e6e6"/><circle cx="825.4" cy="247.5" r="2.1" fill="#3a393c"/><circle cx="824.8" cy="246.8" r="0.7" fill="#d0d0d0"/><text transform="translate(905.4 251.5) scale(0.72 1.05)" font-family="Liberation Sans, sans-serif" font-size="11.5" fill="#cfcfcf">&lt;</text><text x="911.2" y="250.9" font-family="Liberation Sans, sans-serif" font-size="9.4" fill="#cfcfcf" letter-spacing="1.5">...</text><circle cx="966.7" cy="247.5" r="3.2" fill="#7a787b" stroke="#cfcfcf" stroke-width="1.2"/><circle cx="966.7" cy="247.5" r="1.1" fill="#2a282b"/><path d="M874.4,244.3 v6.4 l4.8,-3.2 Z" fill="#ececec"/><g><rect x="887.4" y="257.30" width="14" height="13.6" rx="1.6" fill="#fff" stroke="#1e1e20" stroke-width="1"/><rect x="888" y="262.3" width="12.8" height="4" fill="#47309a"/><rect x="888" y="266.3" width="12.8" height="1.2" fill="#ab99c9"/></g><path d="M820.2,264.0 c2,-3.6 8.4,-3.6 10.4,0 c-2,3.6 -8.4,3.6 -10.4,0 Z" fill="#e6e6e6"/><circle cx="825.4" cy="264.0" r="2.1" fill="#3a393c"/><circle cx="824.8" cy="263.3" r="0.7" fill="#d0d0d0"/><text transform="translate(905.4 268.0) scale(0.72 1.05)" font-family="Liberation Sans, sans-serif" font-size="11.5" fill="#cfcfcf">&lt;</text><text x="911.2" y="267.4" font-family="Liberation Sans, sans-serif" font-size="9.4" fill="#cfcfcf" letter-spacing="1.5">...</text><circle cx="966.7" cy="264.0" r="3.2" fill="#7a787b" stroke="#cfcfcf" stroke-width="1.2"/><circle cx="966.7" cy="264.0" r="1.1" fill="#2a282b"/><g><rect x="887.4" y="273.80" width="14" height="13.6" rx="1.6" fill="#fff" stroke="#1e1e20" stroke-width="1"/><path d="M893.6,274.6 l1.6,12" stroke="#c8c8cc" stroke-width="0.8"/></g><path d="M820.2,280.5 c2,-3.6 8.4,-3.6 10.4,0 c-2,3.6 -8.4,3.6 -10.4,0 Z" fill="#e6e6e6"/><circle cx="825.4" cy="280.5" r="2.1" fill="#3a393c"/><circle cx="824.8" cy="279.8" r="0.7" fill="#d0d0d0"/><text transform="translate(905.4 284.5) scale(0.72 1.05)" font-family="Liberation Sans, sans-serif" font-size="11.5" fill="#cfcfcf">&lt;</text><text x="911.2" y="283.9" font-family="Liberation Sans, sans-serif" font-size="9.4" fill="#cfcfcf" letter-spacing="1.5">...</text><circle cx="966.7" cy="280.5" r="3.2" fill="#7a787b" stroke="#cfcfcf" stroke-width="1.2"/><circle cx="966.7" cy="280.5" r="1.1" fill="#2a282b"/><g><rect x="887.4" y="290.30" width="14" height="13.6" rx="1.6" fill="#fff" stroke="#1e1e20" stroke-width="1"/><path d="M889.6,291.9 h8.4 l1,10.6 h-8.6 Z" fill="#ab99c9"/><path d="M889.6,291.9 l0.8,10.6" stroke="#e8e0f4" stroke-width="0.8"/></g><path d="M820.2,297.0 c2,-3.6 8.4,-3.6 10.4,0 c-2,3.6 -8.4,3.6 -10.4,0 Z" fill="#e6e6e6"/><circle cx="825.4" cy="297.0" r="2.1" fill="#3a393c"/><circle cx="824.8" cy="296.3" r="0.7" fill="#d0d0d0"/><text transform="translate(905.4 301.0) scale(0.72 1.05)" font-family="Liberation Sans, sans-serif" font-size="11.5" fill="#cfcfcf">&lt;</text><text x="911.2" y="300.4" font-family="Liberation Sans, sans-serif" font-size="9.4" fill="#cfcfcf" letter-spacing="1.5">...</text><circle cx="966.7" cy="297.0" r="3.2" fill="#7a787b" stroke="#cfcfcf" stroke-width="1.2"/><circle cx="966.7" cy="297.0" r="1.1" fill="#2a282b"/><g><rect x="887.4" y="306.80" width="14" height="13.6" rx="1.6" fill="#fff" stroke="#1e1e20" stroke-width="1"/><path d="M888.6,309.8 l10.6,-0.8 l0.8,9.4 h-11.4 Z" fill="#7b62ad"/><path d="M899.2,309.0 l0.8,9.4" stroke="#e8e0f4" stroke-width="1"/></g><path d="M820.2,313.5 c2,-3.6 8.4,-3.6 10.4,0 c-2,3.6 -8.4,3.6 -10.4,0 Z" fill="#e6e6e6"/><circle cx="825.4" cy="313.5" r="2.1" fill="#3a393c"/><circle cx="824.8" cy="312.8" r="0.7" fill="#d0d0d0"/><text transform="translate(905.4 317.5) scale(0.72 1.05)" font-family="Liberation Sans, sans-serif" font-size="11.5" fill="#cfcfcf">&lt;</text><text x="911.2" y="316.9" font-family="Liberation Sans, sans-serif" font-size="9.4" fill="#cfcfcf" letter-spacing="1.5">...</text><circle cx="966.7" cy="313.5" r="3.2" fill="#7a787b" stroke="#cfcfcf" stroke-width="1.2"/><circle cx="966.7" cy="313.5" r="1.1" fill="#2a282b"/><g><rect x="887.4" y="323.30" width="14" height="13.6" rx="1.6" fill="#fff" stroke="#1e1e20" stroke-width="1"/><rect x="888" y="326.9" width="12.8" height="5.2" fill="#47309a"/><rect x="888" y="332.1" width="12.8" height="1.4" fill="#ab99c9"/></g><path d="M820.2,330.0 c2,-3.6 8.4,-3.6 10.4,0 c-2,3.6 -8.4,3.6 -10.4,0 Z" fill="#e6e6e6"/><circle cx="825.4" cy="330.0" r="2.1" fill="#3a393c"/><circle cx="824.8" cy="329.3" r="0.7" fill="#d0d0d0"/><text transform="translate(905.4 334.0) scale(0.72 1.05)" font-family="Liberation Sans, sans-serif" font-size="11.5" fill="#cfcfcf">&lt;</text><text x="911.2" y="333.4" font-family="Liberation Sans, sans-serif" font-size="9.4" fill="#cfcfcf" letter-spacing="1.5">...</text><circle cx="966.7" cy="330.0" r="3.2" fill="#7a787b" stroke="#cfcfcf" stroke-width="1.2"/><circle cx="966.7" cy="330.0" r="1.1" fill="#2a282b"/><g><rect x="887.4" y="339.80" width="14" height="13.6" rx="1.6" fill="#fff" stroke="#1e1e20" stroke-width="1"/><path d="M889,346.0 h11" stroke="#d4d4d8" stroke-width="0.8"/></g><path d="M820.2,346.5 c2,-3.6 8.4,-3.6 10.4,0 c-2,3.6 -8.4,3.6 -10.4,0 Z" fill="#e6e6e6"/><circle cx="825.4" cy="346.5" r="2.1" fill="#3a393c"/><circle cx="824.8" cy="345.8" r="0.7" fill="#d0d0d0"/><text transform="translate(905.4 350.5) scale(0.72 1.05)" font-family="Liberation Sans, sans-serif" font-size="11.5" fill="#cfcfcf">&lt;</text><text x="911.2" y="349.9" font-family="Liberation Sans, sans-serif" font-size="9.4" fill="#cfcfcf" letter-spacing="1.5">...</text><circle cx="966.7" cy="346.5" r="3.2" fill="#7a787b" stroke="#cfcfcf" stroke-width="1.2"/><circle cx="966.7" cy="346.5" r="1.1" fill="#2a282b"/><g><rect x="887.4" y="356.30" width="14" height="13.6" rx="1.6" fill="#fff" stroke="#1e1e20" stroke-width="1"/><path d="M889,363.1 h11" stroke="#c4c4cc" stroke-width="0.9"/></g><path d="M820.2,363.0 c2,-3.6 8.4,-3.6 10.4,0 c-2,3.6 -8.4,3.6 -10.4,0 Z" fill="#e6e6e6"/><circle cx="825.4" cy="363.0" r="2.1" fill="#3a393c"/><circle cx="824.8" cy="362.3" r="0.7" fill="#d0d0d0"/><text transform="translate(905.4 367.0) scale(0.72 1.05)" font-family="Liberation Sans, sans-serif" font-size="11.5" fill="#cfcfcf">&lt;</text><text x="911.2" y="366.4" font-family="Liberation Sans, sans-serif" font-size="9.4" fill="#cfcfcf" letter-spacing="1.5">...</text><circle cx="966.7" cy="363.0" r="3.2" fill="#7a787b" stroke="#cfcfcf" stroke-width="1.2"/><circle cx="966.7" cy="363.0" r="1.1" fill="#2a282b"/><g><rect x="887.4" y="372.80" width="14" height="13.6" rx="1.6" fill="#fff" stroke="#1e1e20" stroke-width="1"/><path d="M889,379.8 h11" stroke="#8a76c0" stroke-width="1"/></g><path d="M820.2,379.5 c2,-3.6 8.4,-3.6 10.4,0 c-2,3.6 -8.4,3.6 -10.4,0 Z" fill="#e6e6e6"/><circle cx="825.4" cy="379.5" r="2.1" fill="#3a393c"/><circle cx="824.8" cy="378.8" r="0.7" fill="#d0d0d0"/><text transform="translate(905.4 383.5) scale(0.72 1.05)" font-family="Liberation Sans, sans-serif" font-size="11.5" fill="#cfcfcf">&lt;</text><text x="911.2" y="382.9" font-family="Liberation Sans, sans-serif" font-size="9.4" fill="#cfcfcf" letter-spacing="1.5">...</text><circle cx="966.7" cy="379.5" r="3.2" fill="#7a787b" stroke="#cfcfcf" stroke-width="1.2"/><circle cx="966.7" cy="379.5" r="1.1" fill="#2a282b"/></svg>
<div class="a" style="left:813.0px;top:387.4px;width:187.0px;height:15.0px;background:#4a484b"></div>
<div class="a serif" style="left:817.4px;top:389.0px;white-space:nowrap;font-size:9.4px;line-height:12px;color:#e0e0e0;letter-spacing:0.2px">1 个图层</div>
<svg class="a" style="left:886px;top:388px" width="100" height="14" viewBox="886 388 100 14"><circle cx="895.6" cy="393.6" r="3.3" fill="none" stroke="#e0e0e0" stroke-width="1.3"/><path d="M893.2,396.2 L890,399.8" stroke="#e0e0e0" stroke-width="1.6" stroke-linecap="round"/><rect x="909.4" y="390.6" width="6.6" height="6.6" fill="none" stroke="#e0e0e0" stroke-width="1"/><rect x="912" y="393.2" width="6.4" height="6.4" fill="#4a484b" stroke="#e0e0e0" stroke-width="1"/><rect x="911.4" y="392.6" width="3" height="3" fill="#e0e0e0"/><path d="M928.6,391.4 v3 h3.4 M930.6,392.6 l1.8,1.8 l-1.8,1.8" fill="none" stroke="#e0e0e0" stroke-width="1.1"/><path d="M934.4,391.6 h5.4 v7.4 h-3.4 v-3.4 h-2 Z" fill="#e0e0e0"/><path d="M951.4,390.6 h7.6 v8.6 h-4.4 v-4 h-3.2 Z" fill="#e0e0e0"/><path d="M950.6,396.4 h2.8 v2.8 h-2.8 Z" fill="none" stroke="#e0e0e0" stroke-width="0.9"/><path d="M971,392.4 h8 M973.6,392.2 v-1.2 h2.8 v1.2 M972,393.6 l0.6,6.2 h4.8 l0.6,-6.2 M974,394.6 v4 M976,394.6 v4" fill="none" stroke="#757477" stroke-width="1"/></svg>
<div class="a" style="left:811.0px;top:402.4px;width:189.0px;height:3.0px;background:#2e2c2f"></div>
<div class="a" style="left:813.0px;top:405.4px;width:187.0px;height:14.0px;background:#2f2d30"></div>
<div class="a" style="left:813.0px;top:405.4px;width:33.0px;height:14.0px;background:#3e3c3f"></div>
<div class="a" style="left:846.4px;top:405.4px;width:40.4px;height:14.2px;background:#4a484b"></div>
<div class="a" style="left:845.8px;top:405.4px;width:1.0px;height:14.0px;background:#38373a"></div>
<div class="a" style="left:886.8px;top:405.4px;width:1.0px;height:14.0px;background:#38373a"></div>
<div class="a " style="left:818.6px;top:406.0px;white-space:nowrap;font-size:9.4px;line-height:13px;color:#8a888b">渐变</div>
<svg class="a" style="left:848px;top:408.6px" width="5" height="9" viewBox="0 0 5 9"><path d="M0.4,3.4 L2.5,0.8 L4.6,3.4 Z M0.4,5.4 L2.5,8 L4.6,5.4 Z" fill="#e4e4e4"/></svg>
<div class="a " style="left:854.0px;top:406.0px;white-space:nowrap;font-size:9.6px;line-height:13px;color:#f2f2f2">透明度</div>
<div class="a" style="left:817.0px;top:425.6px;width:67.4px;height:14.6px;background:#5e5d60;border:1px solid #39383b"><div class="a serif" style="left:8.4px;top:0.4px;font-size:9.4px;line-height:12px;color:#e4e4e4">正常</div><svg class="a" style="left:57px;top:5px" width="6" height="4"><path d="M0.2,0.2 h5.4 l-2.7,3.2z" fill="#e4e4e4"/></svg></div>
<div class="a serif" style="left:892.6px;top:426.2px;white-space:nowrap;font-size:9.4px;line-height:13px;color:#e4e4e4">不透明度:</div>
<div class="a" style="left:936.4px;top:425.2px;width:42.2px;height:14.6px;background:#a6a5a8;border:1px solid #39383b"><div class="a serif" style="left:2.4px;top:0;font-size:9.8px;line-height:12px;color:#2a2a2a;transform:scaleX(0.8);transform-origin:0 0">100%</div></div>
<div class="a" style="left:979.0px;top:425.2px;width:12.0px;height:14.6px;background:#5e5d60;border:1px solid #39383b;border-left:none"><svg width="11" height="12.6" style="display:block"><path d="M3.6,3 v6.4 l4.4,-3.2 z" fill="#ececec"/></svg></div>
<div class="a" style="left:818.8px;top:453.8px;width:39.0px;height:39.4px;background:#fff;border:1px solid #2c2b2e"><div class="a" style="left:16.6px;top:1px;width:3.6px;height:37px;background:#dcdce0"></div></div>
<div class="a" style="left:866.4px;top:463.0px;width:1.6px;height:1.6px;background:#a0a0a0"></div>
<div class="a" style="left:879.6px;top:453.8px;width:39.4px;height:39.4px;background:#4e4d50;border:1px solid #747376"></div>
<svg class="a" style="left:890.4px;top:465px" width="18" height="18" viewBox="0 0 18 18"><circle cx="9" cy="9" r="7" fill="none" stroke="#c4c4c4" stroke-width="1.9"/><path d="M4.2,4.2 L13.8,13.8" stroke="#c4c4c4" stroke-width="1.9"/></svg>
<div class="a" style="left:926.0px;top:451.2px;width:53.0px;height:14.6px;background:#5c5b5e;border:1px solid #2c2b2e;border-radius:1px;box-shadow:inset 0 1px 0 #6c6b6e"><div class="a serif" style="left:6px;top:0.2px;font-size:9.6px;line-height:12px;color:#e8e8e8;letter-spacing:0.6px">制作蒙版</div></div>
<div class="a" style="left:926.0px;top:472.2px;width:8.8px;height:8.8px;background:#4a494c;border:1px solid #3a393c"></div>
<div class="a serif" style="left:938.6px;top:471.0px;white-space:nowrap;font-size:9.4px;line-height:12px;color:#7c7b7e">剪切</div>
<!-- /RIGHTPANEL -->
<!-- STATUS -->
<div class="a" style="left:798.6px;top:256.6px;width:10.8px;height:12.2px;background:#8a898c"></div>
<svg class="a" style="left:800.4px;top:40.8px" width="8" height="5.4"><path d="M0.2,4.8 L3.8,0.4 L7.4,4.8 Z" fill="#ececec"/></svg>
<svg class="a" style="left:800.4px;top:480.4px" width="8" height="5"><path d="M0.2,0.2 L3.8,4.6 L7.4,0.2 Z" fill="#ececec"/></svg>
<svg class="a" style="left:57px;top:489px" width="753" height="11" viewBox="57 489 753 11"><rect x="57" y="489" width="753" height="0.8" fill="#3e3d40"/><rect x="63.6" y="491.6" width="14" height="8" rx="1" fill="#5c5b5e" stroke="#6e6d70" stroke-width="0.8"/><circle cx="68" cy="496" r="2" fill="none" stroke="#7a797c" stroke-width="1"/><path d="M72,495 h4 M74,493 v4" stroke="#7a797c" stroke-width="0.9"/><path d="M88.2,493.4 h3 M88.2,493.4 v6 h7 v-2" fill="none" stroke="#e4e4e4" stroke-width="1.4"/><path d="M91.4,497.4 c0,-3 1.6,-4.2 3.6,-4.2 v-1.8 l3,2.8 l-3,2.8 v-1.8 c-1.6,0 -2.8,0.6 -3.6,2.2 Z" fill="#e4e4e4"/><rect x="105.6" y="490.4" width="32.6" height="10" fill="#a6a5a8" stroke="#2e2d30" stroke-width="0.8"/><text x="107.4" y="499.6" font-family="Liberation Serif, serif" font-size="9.8" fill="#1c1c1c" letter-spacing="0.35">130.88</text><rect x="138.6" y="490.4" width="11.4" height="10" fill="#39383b" stroke="#2e2d30" stroke-width="0.8"/><path d="M141.6,495 h5.6 l-2.8,3.4 Z" fill="#ececec"/><path d="M157.4,493 v6" stroke="#706f72" stroke-width="1.2"/><path d="M163.6,493 v6 l-4.2,-3 Z M175,493 v6 l-4.2,-3 Z" fill="#706f72"/><rect x="183.8" y="490.4" width="32.4" height="10" fill="#a6a5a8" stroke="#2e2d30" stroke-width="0.8"/><text x="185.6" y="499.6" font-family="Liberation Serif, serif" font-size="9.8" fill="#1c1c1c">1</text><rect x="216.6" y="490.4" width="11.4" height="10" fill="#39383b" stroke="#2e2d30" stroke-width="0.8"/><path d="M219.6,495 h5.6 l-2.8,3.4 Z" fill="#ececec"/><path d="M236.4,493 v6 l4.2,-3 Z M248.4,493 v6 l4.2,-3 Z" fill="#706f72"/><path d="M254.4,493 v6" stroke="#706f72" stroke-width="1.2"/><rect x="261.6" y="490" width="0.9" height="10" fill="#3a393c"/><text x="331" y="500.6" font-family="Liberation Serif, Noto Serif CJK SC, serif" font-size="9.4" fill="#dcdcdc">选择</text><path d="M424.2,492.4 v6.4 l4.2,-3.2 Z" fill="#ececec"/><rect x="432.4" y="489" width="365.6" height="11" fill="#343336"/><path d="M441.2,492.4 v6.4 l-4.2,-3.2 Z" fill="#ececec"/><rect x="607.4" y="489.6" width="12" height="10.4" fill="#8c8b8e"/><path d="M788.4,492.4 v6.4 l4.4,-3.2 Z" fill="#ececec"/><rect x="798" y="489" width="12" height="11" fill="#3e3d40"/></svg>
<!-- /STATUS -->
<!-- WATERMARK -->
<div class="a" style="left:767.6px;top:416.6px;font-size:37px;line-height:40px;font-weight:bold;color:#fff;-webkit-text-stroke:0.7px #fff;opacity:0.72;white-space:nowrap;letter-spacing:0.6px">Bai</div>
<svg class="a" style="left:830px;top:394px" width="58" height="60" viewBox="830 394 58 60"><g fill="rgba(255,255,255,0.72)"><ellipse cx="848.1" cy="402.6" rx="6" ry="8.5" transform="rotate(-4 848.1 402.6)"/><ellipse cx="864.2" cy="403.6" rx="6.1" ry="8.5" transform="rotate(8 864.2 403.6)"/><ellipse cx="835.2" cy="415.8" rx="6.3" ry="7.7" transform="rotate(-18 835.2 415.8)"/><ellipse cx="875.2" cy="419.4" rx="6.6" ry="8.2" transform="rotate(20 875.2 419.4)"/><path d="M855.6,416.8 C860.5,416.8 863.5,420 866.5,424.5 C869.5,429 878,433.5 878,441 C878,446.5 874,449.4 869,449.4 C864,449.4 860,447.8 855.4,447.8 C850.8,447.8 846.5,449.4 841.5,449.4 C836.5,449.4 832,446.5 832,441 C832,433.5 841,429 844.5,424.5 C847.5,420 850.6,416.8 855.6,416.8 Z"/></g><text transform="translate(842.4 443) scale(0.87 1)" x="0" y="0" font-family="Liberation Sans, sans-serif" font-weight="bold" font-size="23.4" fill="#4c4b4e" fill-opacity="0.96" letter-spacing="-0.3">du</text></svg>
<div class="a" style="left:884.6px;top:417px;font-size:29px;line-height:40px;font-weight:900;color:rgba(255,255,255,0.72);white-space:nowrap">经验</div>
<div class="a" style="left:767.6px;top:452.6px;font-size:20.5px;line-height:26px;color:rgba(255,255,255,0.86);text-shadow:0 0 1.5px rgba(0,0,0,0.45);white-space:nowrap;letter-spacing:0.72px">jingyan.baidu.com</div>
<div class="a" style="left:986px;top:399px;width:36.4px;height:36.4px;border-radius:50%;background:radial-gradient(circle at 40% 25%,#8ae49a 0%,#3cc45c 45%,#22a844 100%);border:1.3px solid #c4ecd0;box-shadow:0 0 1px #1a7a30"></div>
<div class="a" style="left:990.6px;top:410.4px;font-size:9.6px;line-height:12px;font-weight:bold;color:#f4fff4;white-space:nowrap">75</div>
<div class="a" style="left:886px;top:482px;width:111.6px;height:18px;background:#fbfbfd;border-radius:1px"></div>
<svg class="a" style="left:868px;top:476px" width="30" height="24" viewBox="868 476 30 24"><defs><linearGradient id="sg" x1="0" x2="1" y1="0" y2="1"><stop offset="0" stop-color="#7ada48"/><stop offset="1" stop-color="#2ea424"/></linearGradient></defs><rect x="872.6" y="480.6" width="18.4" height="22" rx="3.4" fill="url(#sg)" transform="rotate(-12 882 492)"/><text transform="translate(873.4 497.4) rotate(-8) scale(1.22 1)" font-family="Liberation Sans, sans-serif" font-weight="bold" font-style="italic" font-size="18.4" fill="#fff">S</text></svg>
<div class="a" style="left:897px;top:484.4px;font-size:11.4px;line-height:14px;font-weight:bold;color:#2b3252;white-space:nowrap">英</div>
<svg class="a" style="left:912px;top:483px" width="86" height="17" viewBox="912 483 86 17"><path d="M922.4,485.4 c2.6,3 1.6,8.6 -5.4,10.4 c4,2.4 9.4,0.2 9.6,-5 c0.1,-2.6 -1.6,-4.6 -4.2,-5.4 Z" fill="#2b3252"/><circle cx="934.6" cy="489" r="1.3" fill="#2b3252"/><path d="M939.4,491.6 c1.6,0.6 1.6,2.8 -1,3.8 c0.8,-1 0.6,-1.8 -0.4,-2.4 Z" fill="#2b3252"/><circle cx="939.2" cy="492" r="1.2" fill="#2b3252"/><rect x="948.4" y="487" width="12" height="8.4" rx="1.2" fill="#2b3252"/><path d="M950,489.2 h9 M950,491.2 h9" stroke="#fbfbfd" stroke-width="0.9" stroke-dasharray="1.3 0.9"/><path d="M951.6,493.4 h5.6" stroke="#fbfbfd" stroke-width="0.9"/><circle cx="972" cy="488.8" r="2.6" fill="#bcd2d2"/><path d="M967,497 c0,-4 2,-5.4 5,-5.4 c3,0 5,1.4 5,5.4 Z" fill="#bcd2d2"/><path d="M993.6,485.6 c-2.4,-0.8 -4.6,1.2 -4,3.6 l-5.4,5.6 c-0.8,0.8 0.6,2.4 1.6,1.6 l5.6,-5.4 c2.4,0.6 4.2,-1.6 3.6,-3.8 l-2,2 l-1.6,-0.4 l-0.4,-1.6 Z" fill="#2b3252"/></svg>
<!-- /WATERMARK -->
</body>
</html>
